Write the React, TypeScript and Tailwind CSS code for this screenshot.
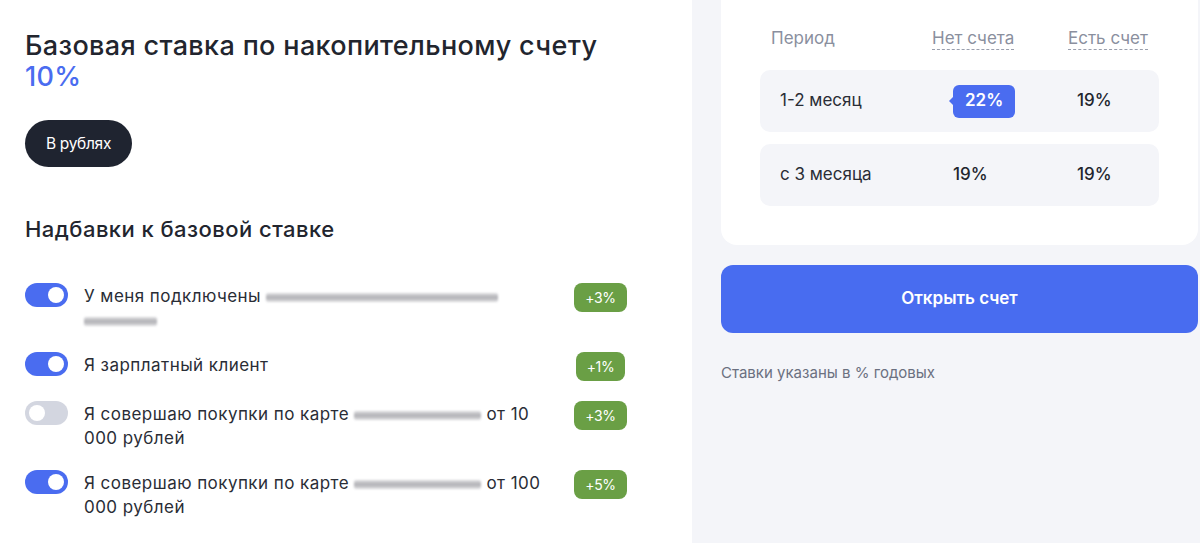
import React from 'react';

type Bonus = {
  on: boolean;
  badge: string;
  content: React.ReactNode;
};

const Blur = ({ w }: { w: number }) => (
  <span
    className="inline-block h-[9px] align-middle rounded-[2px] bg-gradient-to-b from-[#dcdcdf] via-[#a9a9ae] to-[#dcdcdf] blur-[1px] opacity-90"
    style={{ width: w }}
  />
);

const Toggle = ({ on }: { on: boolean }) => (
  <div
    className={`w-[43px] h-[24px] rounded-full flex items-center px-[4px] shrink-0 ${
      on ? 'bg-[#4a6cf0] justify-end' : 'bg-[#d3d6e0] justify-start'
    }`}
  >
    <div className="w-[16px] h-[16px] rounded-full bg-white" />
  </div>
);

const bonuses: Bonus[] = [
  {
    on: true,
    badge: '+3%',
    content: (
      <>
        У меня подключены <Blur w={232} />
        <br />
        <Blur w={73} />
      </>
    ),
  },
  { on: true, badge: '+1%', content: <>Я зарплатный клиент</> },
  {
    on: false,
    badge: '+3%',
    content: (
      <>
        Я совершаю покупки по карте <Blur w={127} /> от 10 000 рублей
      </>
    ),
  },
  {
    on: true,
    badge: '+5%',
    content: (
      <>
        Я совершаю покупки по карте <Blur w={127} /> от 100 000 рублей
      </>
    ),
  },
];

export default function App() {
  return (
    <div
      className="flex w-[1200px] h-[543px] overflow-hidden bg-[#f4f5f9] text-[#22252e]"
      style={{ fontFamily: 'Inter, "Noto Sans", sans-serif' }}
    >
      {/* left side */}
      <div className="w-[692px] bg-white pl-[25px] pt-[29px] shrink-0">
        <h1 className="text-[27px] leading-[33px] font-medium tracking-[0.35px]">
          Базовая ставка по накопительному счету
        </h1>
        <div className="text-[27px] leading-[30px] font-medium text-[#4a6cf0] tracking-[0.3px]">10%</div>

        <button className="mt-[28px] h-[47px] w-[107px] rounded-full bg-[#1f2430] text-white text-[15.5px] tracking-[-0.3px]">
          В рублях
        </button>

        <h2 className="mt-[48px] text-[22px] leading-[28px] font-medium tracking-[0.45px]">
          Надбавки к базовой ставке
        </h2>

        <div className="mt-[40px] flex flex-col gap-[20px] w-[630px]">
          {bonuses.map((b, i) => (
            <div key={i} className="flex items-start">
              <Toggle on={b.on} />
              <div className="ml-[16px] w-[462px] text-[17px] leading-[24px] tracking-[0.45px] text-[#2a2d36] pt-[1px]">
                {b.content}
              </div>
              <div className="flex-1 flex justify-center">
                <span className="h-[29px] px-[11px] rounded-[8px] bg-[#6a9f45] text-white text-[14px] flex items-center tracking-[-0.4px]">
                  {b.badge}
                </span>
              </div>
            </div>
          ))}
        </div>
      </div>

      {/* right side */}
      <div className="flex-1 pl-[29px] pr-[2px]">
        <div className="bg-white rounded-b-[16px] pt-[26px] pb-[39px] px-[39px]">
          <div className="flex text-[17px] leading-[24px] text-[#8a8f9e] pl-[11px]">
            <div className="w-[161px]">Период</div>
            <div className="w-[136px]">
              <span className="border-b border-dashed border-[#9a9fad] pb-[1px]">Нет счета</span>
            </div>
            <div>
              <span className="border-b border-dashed border-[#9a9fad] pb-[1px]">Есть счет</span>
            </div>
          </div>

          <div className="mt-[20px] flex flex-col gap-[12px]">
            <div className="h-[62px] rounded-[10px] bg-[#f4f5f9] flex items-center pl-[20px] text-[17px]">
              <div className="w-[173px] text-[#2a2d36]">1-2 месяц</div>
              <div className="w-[124px]">
                <span className="relative inline-flex items-center h-[33px] px-[12px] rounded-[6px] bg-[#4a6cf0] text-white font-semibold">
                  <span className="absolute -left-[4px] top-[11px] w-0 h-0 border-y-[5px] border-y-transparent border-r-[5px] border-r-[#4a6cf0]" />
                  22%
                </span>
              </div>
              <div className="font-medium">19%</div>
            </div>
            <div className="h-[62px] rounded-[10px] bg-[#f4f5f9] flex items-center pl-[20px] text-[17px]">
              <div className="w-[173px] text-[#2a2d36]">с 3 месяца</div>
              <div className="w-[124px] font-medium">19%</div>
              <div className="font-medium">19%</div>
            </div>
          </div>
        </div>

        <button className="mt-[20px] w-full h-[68px] rounded-[12px] bg-[#486cf0] text-white text-[17px] font-semibold">
          Открыть счет
        </button>

        <p className="mt-[29px] text-[15px] text-[#6b7080]">Ставки указаны в % годовых</p>
      </div>
    </div>
  );
}
